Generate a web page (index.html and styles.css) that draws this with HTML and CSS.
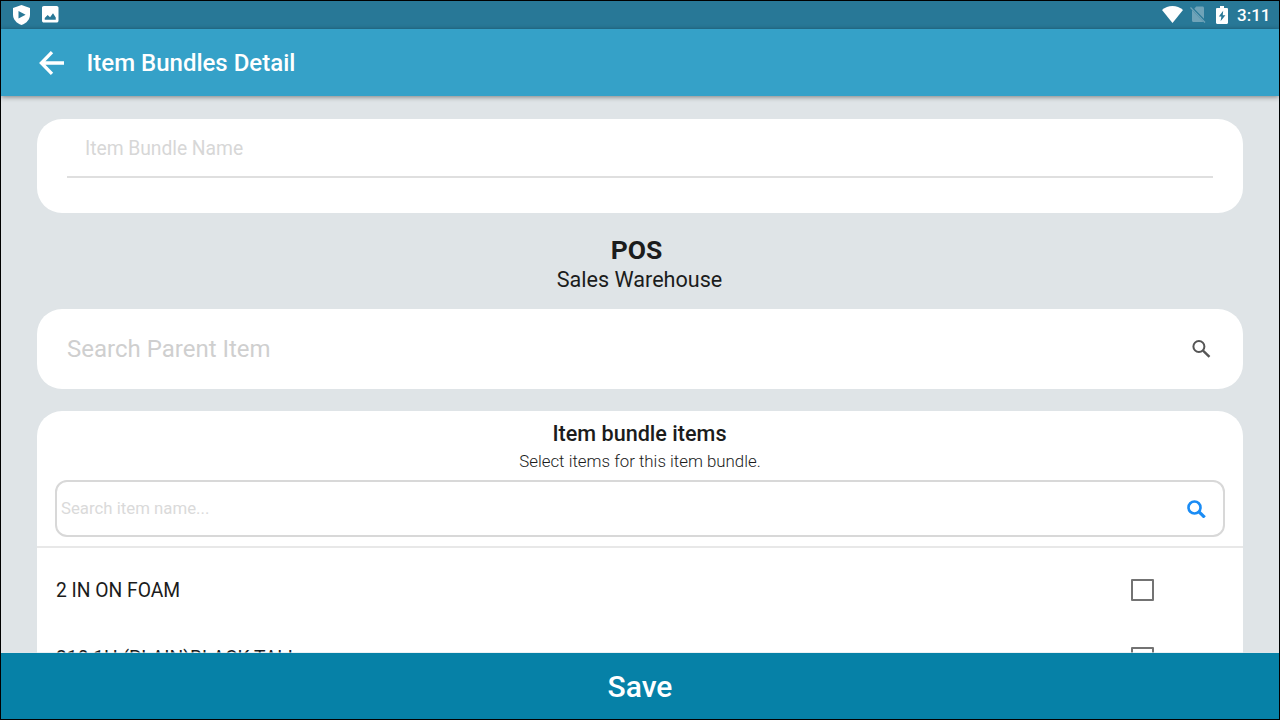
FILE: index.html
```html
<!DOCTYPE html>
<html lang="en">
<head>
<meta charset="utf-8">
<title>Item Bundles Detail</title>
<link rel="stylesheet" href="styles.css">
</head>
<body>
<div class="screen">
  <div class="status-bar">
    <svg class="icon-shield" viewBox="0 0 17 20"><path fill="#fff" d="M8.500 0 17 3v6.500c0 4.800-3.300 8.700-8.500 10.500C3.300 18.200 0 14.300 0 9.500V3z"/><path fill="#287897" d="M5.500 6v7.400L12.600 9.700z"/></svg>
    <svg class="icon-picture" viewBox="3 3 18 18"><path fill="#fff" d="M21 19V5c0-1.100-.9-2-2-2H5c-1.100 0-2 .9-2 2v14c0 1.100.9 2 2 2h14c1.100 0 2-.9 2-2zM6 18v-2l3.200-3.200 2.600 2.500 3.200-4.300 3 4.500V18z"/></svg>
    <svg class="icon-wifi" viewBox="0 0 21 17"><path fill="#fff" d="M10.500 17 0 3.900C3 1.300 6.600 0 10.500 0S18 1.300 21 3.900z"/></svg>
    <svg class="icon-sim" viewBox="0 0 16 17"><path fill="#6fa3b8" d="M6.200 .5H12.500c.9 0 1.500.6 1.500 1.500v10.800L4.300 2.700zM2 4.100 13.500 16H3.500C2.600 16 2 15.400 2 14.500z"/><path stroke="#6fa3b8" stroke-width="1.200" d="M.5 1.500 15 16.500"/></svg>
    <svg class="icon-battery" viewBox="0 0 12 18"><path fill="#fff" d="M4 0h4v2h2.800c.7 0 1.200.5 1.200 1.200v13.600c0 .7-.5 1.200-1.200 1.200H1.200C.5 18 0 17.500 0 16.800V3.200C0 2.500.5 2 1.200 2H4z"/><path fill="#287897" d="M7.200 4.800 2.800 10.500h2.600l-.8 4.800 4.800-6.100H6.700z"/></svg>
    <span class="clock">3:11</span>
  </div>
  <header class="app-bar">
    <svg class="icon-back" viewBox="0 0 25 24"><path fill="none" stroke="#fff" stroke-width="3.300" d="M25 12H2.500M13 1.200 2.400 12 13 22.800"/></svg>
    <h1 class="title">Item Bundles Detail</h1>
  </header>
  <main class="content">
    <section class="card name-card">
      <div class="name-field">Item Bundle Name</div>
    </section>
    <section class="place">
      <h2 class="place-title">POS</h2>
      <p class="place-name">Sales Warehouse</p>
    </section>
    <section class="card parent-card">
      <span class="parent-hint">Search Parent Item</span>
      <svg class="icon-search" viewBox="0 0 19 18"><circle cx="6.900" cy="6.500" r="5.500" fill="none" stroke="#555" stroke-width="2"/><path d="m11 10.600 6.500 6.300" stroke="#555" stroke-width="2.400"/></svg>
    </section>
    <section class="card items-card">
      <h3 class="items-title">Item bundle items</h3>
      <p class="items-sub">Select items for this item bundle.</p>
      <div class="item-search">
        <span class="item-hint">Search item name...</span>
        <svg class="icon-search" viewBox="0 0 19 18"><circle cx="7.500" cy="7.500" r="6" fill="none" stroke="#1a8cf5" stroke-width="2.600"/><path d="m11.800 11.600 5.900 5.800" stroke="#1a8cf5" stroke-width="3.200"/></svg>
      </div>
      <ul class="items">
        <li class="item"><span class="item-name">2 IN ON FOAM</span><span class="checkbox"></span></li>
        <li class="item"><span class="item-name">210 1H (PLAIN)BLACK TALL</span><span class="checkbox"></span></li>
      </ul>
    </section>
  </main>
  <button class="save">Save</button>
</div>
</body>
</html>
```
FILE: styles.css
```css
* { box-sizing: border-box; margin: 0; padding: 0; }
body { font-family: Roboto, "Liberation Sans", sans-serif; color: #1b1c1c; overflow: hidden; }
svg { display: block; flex: none; }
.screen { width: 1280px; height: 720px; border: 1px solid #000; display: flex; flex-direction: column; overflow: hidden; background: #dfe4e7; }

.status-bar { flex: none; height: 28px; background: #287897; display: flex; align-items: center; padding: 0 9px 1px 12px; }
.icon-shield { width: 17px; height: 20px; }
.icon-picture { width: 16.500px; height: 16.500px; margin-left: 12px; }
.icon-wifi { width: 21px; height: 17px; margin-left: auto; }
.icon-sim { width: 16px; height: 17px; margin-left: 7px; }
.icon-battery { width: 12px; height: 18px; margin-left: 10px; }
.clock { width: 33px; margin-left: 9.500px; color: #fff; font-size: 17px; font-weight: 500; line-height: 28px; white-space: nowrap; }

.app-bar { flex: none; height: 67px; background: #35a1c8; display: flex; align-items: center; padding: 0 38px; position: relative; box-shadow: 0 1px 5px rgba(0,0,0,.45); }
.icon-back { width: 25px; height: 24px; }
.title { margin-left: 22.500px; color: #fff; font-size: 24px; font-weight: 500; line-height: 30px; }

.content { flex: 1; min-height: 0; overflow: hidden; padding: 23px 36px 0; }
.card { background: #fff; border-radius: 25px; }
.name-card { height: 94px; padding: 14px 30px 0; }
.name-field { height: 45px; padding-left: 18px; border-bottom: 2px solid #dfdfdf; color: #d7d7d7; font-size: 19.300px; letter-spacing: -.04px; line-height: 32px; }
.place { height: 96px; padding-top: 22px; text-align: center; }
.place-title { padding-right: 7px; font-size: 26.500px; font-weight: 700; line-height: 30px; }
.place-name { padding-right: 1px; font-size: 21.600px; line-height: 29px; }
.parent-card { height: 80px; padding: 0 32px 0 30px; display: flex; align-items: center; justify-content: space-between; }
.parent-hint { color: #cfcfcf; font-size: 24px; line-height: 30px; }
.icon-search { width: 19px; height: 18px; }
.items-card { height: 320px; margin-top: 22px; padding-top: 8px; text-align: center; }
.items-title { padding-right: 1px; font-size: 21.600px; font-weight: 500; line-height: 29px; }
.items-sub { font-size: 16.850px; font-weight: 300; line-height: 26px; }
.item-search { height: 57px; margin: 6px 18px 9px; padding: 0 17px 0 4px; border: 2px solid #d8d8d8; border-radius: 12px; display: flex; align-items: center; justify-content: space-between; }
.item-hint { padding-bottom: 2px; color: #dadada; font-size: 16.800px; line-height: 26px; }
.items { list-style: none; border-top: 2px solid #e8e8e8; padding-top: 8px; }
.item { height: 68px; padding: 0 89px 0 19px; display: flex; align-items: center; justify-content: space-between; }
.item-name { padding-top: 2px; font-size: 19.300px; letter-spacing: -.02px; line-height: 26px; }
.checkbox { width: 23px; height: 22px; border: 2px solid #737373; border-radius: 1px; }
.save { flex: none; height: 66px; border: 0; padding-top: 1px; background: #0681a7; color: #fff; font: 500 30px/65px Roboto, "Liberation Sans", sans-serif; position: relative; box-shadow: 0 -1px 0 rgba(220,232,236,.6); }
```
